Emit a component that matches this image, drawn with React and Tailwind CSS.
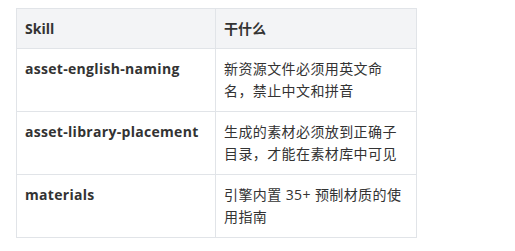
import React from "react";

const rows = [
  ["asset-english-naming", "新资源文件必须用英文命名，禁止中文和拼音"],
  ["asset-library-placement", "生成的素材必须放到正确子目录，才能在素材库中可见"],
  ["materials", "引擎内置 35+ 预制材质的使用指南"],
];

export default function App() {
  return (
    <div
      className="bg-white w-[515px] h-[251px] pt-2 pl-4 text-[#333] text-[14px] leading-[22px]"
      style={{ fontFamily: '"Open Sans", "Noto Sans CJK SC", sans-serif' }}
    >
      <table className="border-collapse table-fixed w-[400px]">
        <colgroup>
          <col className="w-[199px]" />
          <col className="w-[201px]" />
        </colgroup>
        <thead>
          <tr className="bg-[#f3f4f6]">
            <th className="border border-[#e1e4e8] px-2 h-[40px] py-0 text-left font-bold">Skill</th>
            <th className="border border-[#e1e4e8] px-2 h-[40px] py-0 text-left font-bold">干什么</th>
          </tr>
        </thead>
        <tbody>
          {rows.map(([a, b]) => (
            <tr key={a}>
              <td className="border border-[#e1e4e8] px-2 pt-[9px] pb-[9px] align-top font-bold tracking-[0.3px]">{a}</td>
              <td className="border border-[#e1e4e8] px-2 pt-[9px] pb-[9px] align-top tracking-[0.4px]">{b}</td>
            </tr>
          ))}
        </tbody>
      </table>
    </div>
  );
}
